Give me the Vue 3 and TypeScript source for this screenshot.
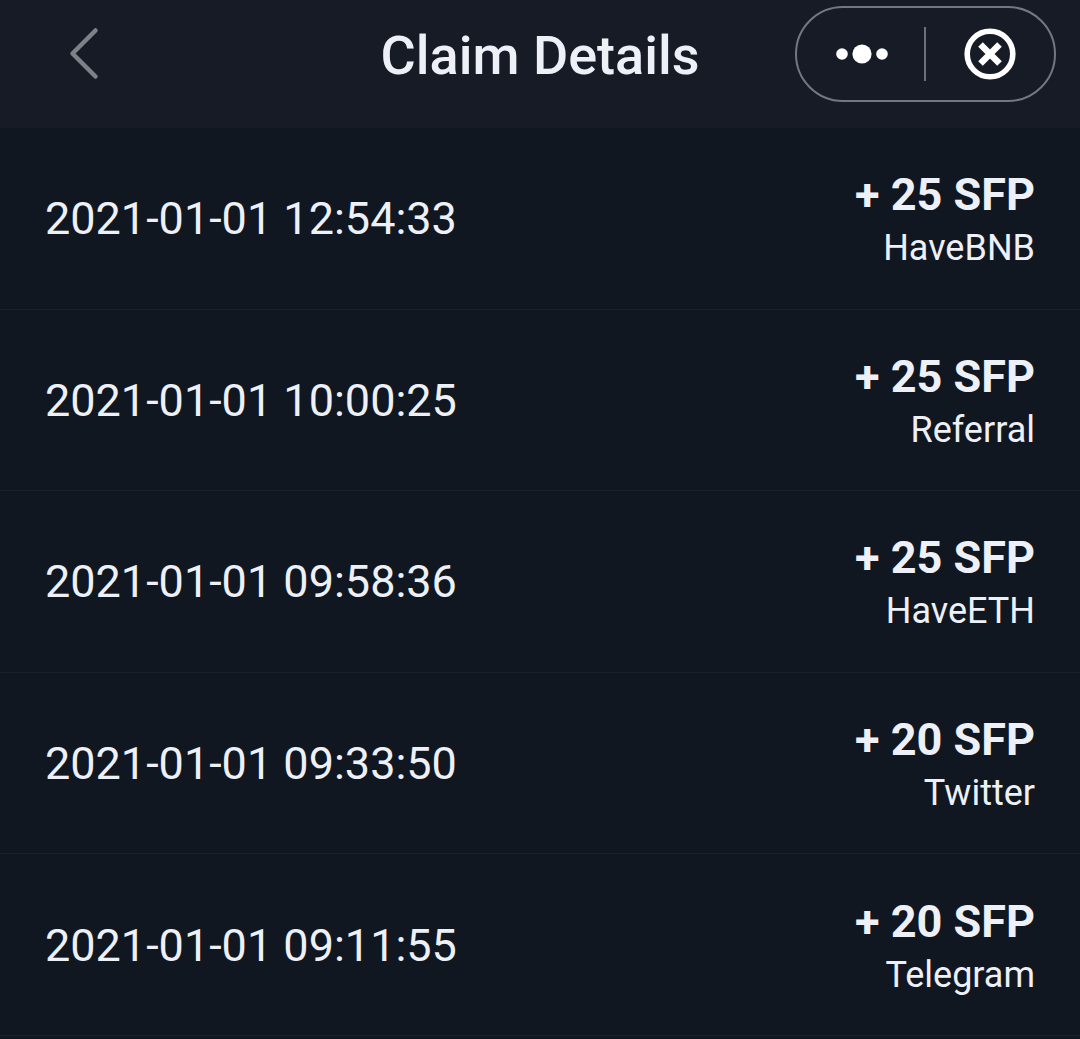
<template>
  <div class="page">
    <header class="nav">
      <button class="back" aria-label="Back">
        <svg width="34" height="56" viewBox="0 0 34 56" fill="none">
          <path d="M28.5 4.5 L5.5 27.5 L28.5 50.5" stroke="#7d8289" stroke-width="4.5" stroke-linecap="round" stroke-linejoin="round" />
        </svg>
      </button>
      <h1 class="title">Claim Details</h1>
      <div class="capsule">
        <svg class="dots" width="52" height="20" viewBox="0 0 52 20">
          <circle cx="6" cy="10" r="5.8" fill="#fff" />
          <circle cx="26" cy="10" r="9.6" fill="#fff" />
          <circle cx="46" cy="10" r="5.8" fill="#fff" />
        </svg>
        <span class="divider"></span>
        <svg class="close" width="52" height="52" viewBox="0 0 52 52" fill="none">
          <circle cx="26" cy="26" r="22.8" stroke="#fff" stroke-width="5.6" />
          <path d="M16.5 16.5 L35.5 35.5 M35.5 16.5 L16.5 35.5" stroke="#fff" stroke-width="6.5" />
        </svg>
      </div>
    </header>
    <ul class="list">
      <li v-for="claim in claims" :key="claim.time" class="row">
        <span class="time">{{ claim.time }}</span>
        <div class="reward">
          <span class="amount">+ {{ claim.amount }} SFP</span>
          <span class="source">{{ claim.source }}</span>
        </div>
      </li>
    </ul>
  </div>
</template>

<script setup lang="ts">
interface Claim {
  time: string
  amount: number
  source: string
}

const claims: Claim[] = [
  { time: '2021-01-01 12:54:33', amount: 25, source: 'HaveBNB' },
  { time: '2021-01-01 10:00:25', amount: 25, source: 'Referral' },
  { time: '2021-01-01 09:58:36', amount: 25, source: 'HaveETH' },
  { time: '2021-01-01 09:33:50', amount: 20, source: 'Twitter' },
  { time: '2021-01-01 09:11:55', amount: 20, source: 'Telegram' }
]
</script>

<style scoped>
.page {
  height: 1039px;
  overflow: hidden;
  background: #111721;
  font-family: Roboto, "Liberation Sans", sans-serif;
  color: #edf0f7;
}

.nav {
  position: relative;
  height: 128px;
  display: flex;
  align-items: center;
  justify-content: center;
  padding-bottom: 17px;
  box-sizing: border-box;
  background: #161b26;
}

.back {
  position: absolute;
  left: 67px;
  top: 26px;
  padding: 0;
  border: none;
  background: none;
}

.back svg {
  display: block;
}

.title {
  margin: 0;
  font-size: 54px;
  font-weight: 500;
  line-height: 60px;
}

.capsule {
  position: absolute;
  top: 6px;
  right: 24px;
  width: 261px;
  height: 96px;
  box-sizing: border-box;
  display: flex;
  align-items: center;
  padding-left: 39px;
  border: 2px solid #73777e;
  border-radius: 48px;
}

.divider {
  width: 2px;
  height: 54px;
  margin-left: 36px;
  background: #6d7178;
}

.close {
  margin-left: 38px;
}

.list {
  margin: 0;
  padding: 0;
  list-style: none;
}

.row {
  height: 181.6px;
  box-sizing: border-box;
  display: flex;
  align-items: center;
  justify-content: space-between;
  padding: 2px 45px 0 45px;
  border-bottom: 1px solid #1b212c;
}

.time {
  font-size: 45px;
  line-height: 52px;
}

.reward {
  display: flex;
  flex-direction: column;
  align-items: flex-end;
}

.amount {
  font-size: 45px;
  font-weight: 700;
  line-height: 52px;
}

.source {
  margin-top: 6px;
  font-size: 36px;
  line-height: 42px;
}
</style>

<style>
body {
  background: #111721;
}
</style>
